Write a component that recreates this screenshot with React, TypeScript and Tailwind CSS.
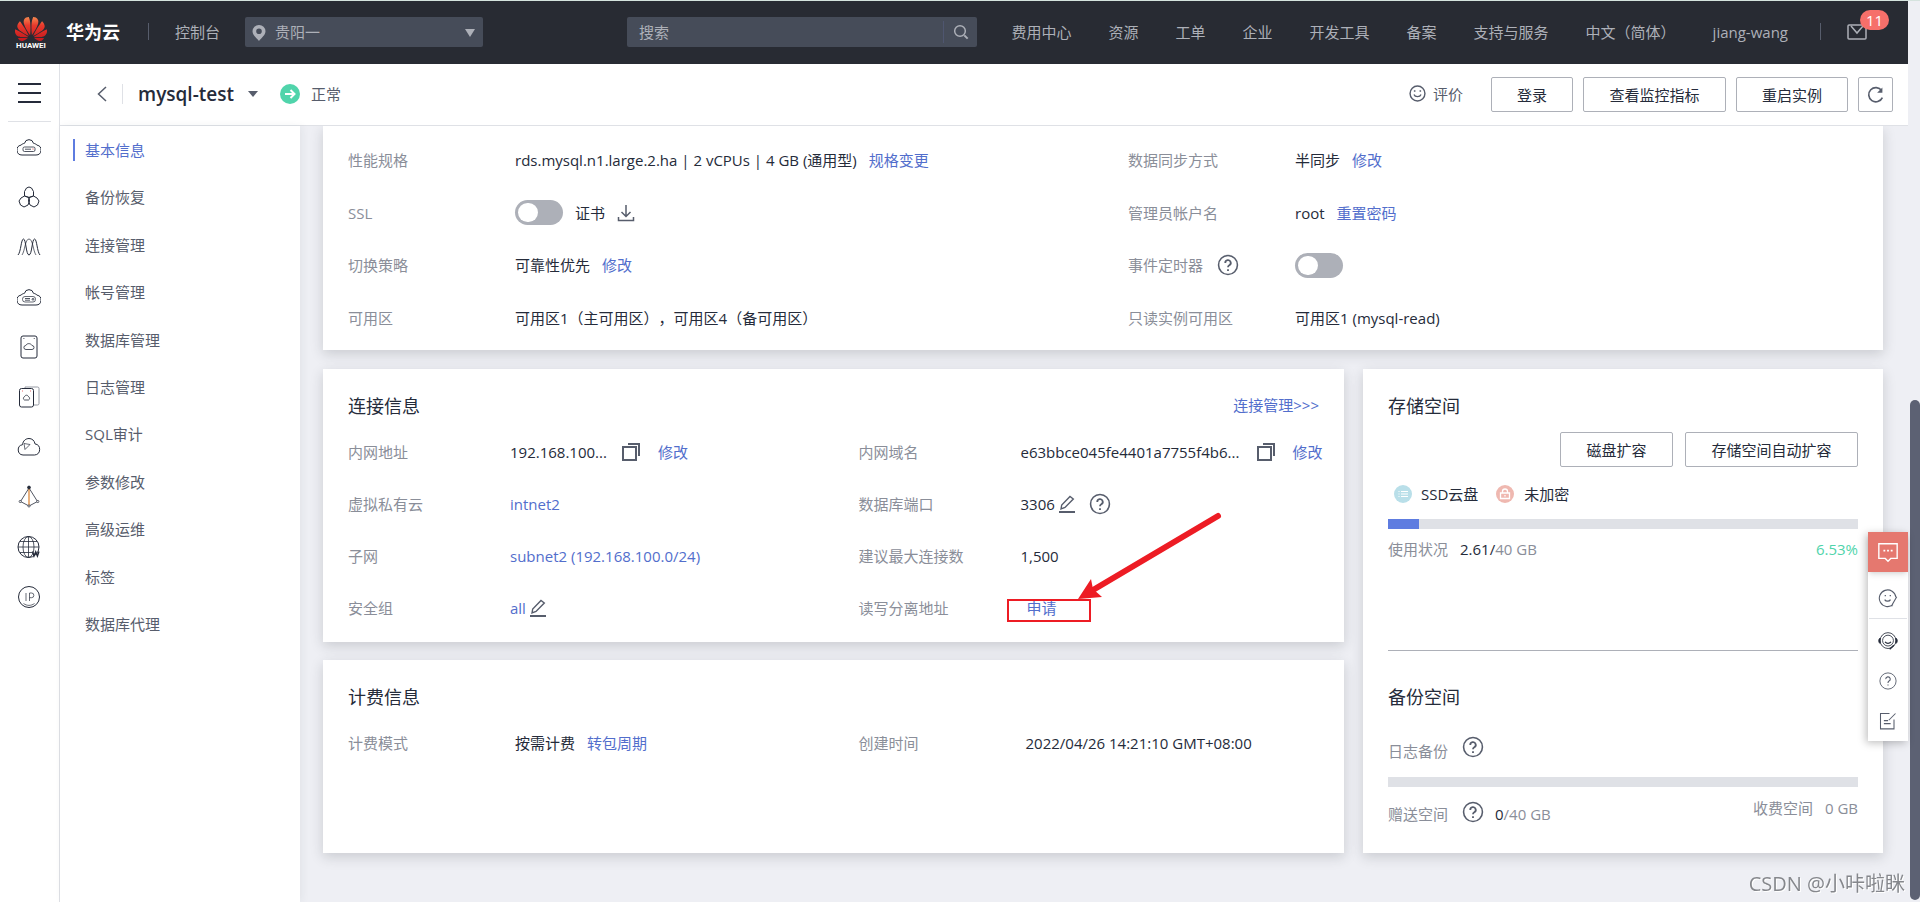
import { useState, type ReactNode } from "react";
import { SiHuawei } from "react-icons/si";

const topNav = ["费用中心", "资源", "工单", "企业", "开发工具", "备案", "支持与服务", "中文（简体）", "jiang-wang"];

const sideNav = [
  "基本信息",
  "备份恢复",
  "连接管理",
  "帐号管理",
  "数据库管理",
  "日志管理",
  "SQL审计",
  "参数修改",
  "高级运维",
  "标签",
  "数据库代理",
];

const cloud = "M5 20a5 5 0 0 1-1-9.900C5 9 6.500 8.500 7.500 8.300a4.600 4.600 0 0 1 9 0c1 .2 2.500.7 3.500 1.800a5 5 0 0 1-1 9.900z";

const services: { name: string; icon: ReactNode }[] = [
  {
    name: "弹性云服务器",
    icon: (
      <>
        <path d={cloud} />
        <rect x="6" y="12" width="12" height="4.500" rx="1.500" strokeWidth="0.800" />
        <path d="M8 14.200h6" strokeWidth="0.800" />
        <path d="M15.500 14h1" stroke="#e5484d" />
      </>
    ),
  },
  {
    name: "云容器引擎",
    icon: (
      <>
        <path d="m9.500 3 2.500-1 2.500 1 2 3.500V11L12 12.500 7.500 11V6.500z" />
        <path d="m4 13 3.500-2 4.500 1.500.5 3.500-1.500 4-4 2-3.500-2L2 16z" />
        <path d="m20 13-3.500-2-4.500 1.500-.5 3.500 1.500 4 4 2 3.500-2 1.500-4z" />
      </>
    ),
  },
  {
    name: "弹性伸缩",
    icon: (
      <>
        <path d="M1 20C4 17 4 4 6.500 4S9 20 12 20 15 4 17.500 4 20 17 23 20" />
        <path d="M5 20C8 16 8 4 12 4s4 12 7 16" strokeWidth="0.700" />
      </>
    ),
  },
  {
    name: "裸金属服务器",
    icon: (
      <>
        <path d={cloud} />
        <rect x="5.500" y="11.500" width="13" height="5.500" rx="2.500" strokeWidth="0.700" />
        <path d="M8 13.500h5M8 15.200h5" strokeWidth="0.800" />
        <circle cx="16" cy="14.300" r="0.900" strokeWidth="0.800" />
      </>
    ),
  },
  {
    name: "云硬盘",
    icon: (
      <>
        <rect x="4" y="1" width="16" height="22" rx="2" />
        <path d="M9 14.500a2 2 0 0 1-.2-4c1-2.500 5-2.500 6.200 0a2 2 0 0 1 0 4z" strokeWidth="0.800" />
        <path d="M6.500 3.500h.8M16.800 3.500h.8" />
      </>
    ),
  },
  {
    name: "云备份",
    icon: (
      <>
        <path d="M8 3.500V2h12.500A1.500 1.500 0 0 1 22 3.500v15a1.500 1.500 0 0 1-1.500 1.500H17" stroke="#8a8e99" strokeWidth="0.900" />
        <rect x="2.500" y="3.500" width="14" height="18.500" rx="2" />
        <path d="M7.500 15a1.800 1.800 0 0 1 0-3.300c.8-2 3.200-2 4 0a1.800 1.800 0 0 1 0 3.300z" strokeWidth="0.800" />
        <path d="M5 6h.8M13 6h.8" stroke="#e5484d" />
      </>
    ),
  },
  {
    name: "虚拟私有云",
    icon: (
      <>
        <path d="M6 20a5.200 5.200 0 0 1-.5-10.300C6 5.500 9 3.500 12 3.500s5.500 2 6 5.400A5.600 5.600 0 0 1 17.500 20z" />
        <path d="m7 8.500 6 1-5 5z" strokeWidth="0.700" />
      </>
    ),
  },
  {
    name: "弹性负载均衡",
    icon: (
      <>
        <path d="M12 3 3.500 16.500 12 21l8.500-4.500z" strokeWidth="0.800" />
        <path d="M12 3v18" stroke="#d97e2a" strokeWidth="1.200" />
        <circle cx="12" cy="2.500" r="1.400" fill="#252b3a" />
        <circle cx="3.200" cy="16.500" r="1.100" fill="#fff" strokeWidth="0.700" />
        <circle cx="20.800" cy="16.500" r="1.100" fill="#fff" strokeWidth="0.700" />
        <circle cx="12" cy="21" r="1.100" fill="#fff" strokeWidth="0.700" />
      </>
    ),
  },
  {
    name: "云解析",
    icon: (
      <>
        <circle cx="11.500" cy="12" r="10.500" />
        <ellipse cx="11.500" cy="12" rx="5.500" ry="10.500" strokeWidth="0.800" />
        <path d="M11.500 1.500v21M1 12h21M3 6.500h17M3 17.500h12" strokeWidth="0.800" />
        <path d="m15.500 16.500 1.500 4.500 1.700-4 1.700 4 1.500-4.500" strokeWidth="1.500" />
      </>
    ),
  },
  {
    name: "弹性公网IP",
    icon: (
      <>
        <circle cx="12" cy="12" r="10.500" />
        <path d="M9 8v8M12.500 16V8h2a2.300 2.300 0 0 1 0 4.700h-2M6.500 18.500c3.500 2.500 7.500 2.500 11 0" strokeWidth="0.700" />
      </>
    ),
  },
];

function Glyph({ children, className = "h-5 w-5" }: { children: ReactNode; className?: string }) {
  return (
    <svg
      viewBox="0 0 24 24"
      fill="none"
      stroke="currentColor"
      strokeWidth="1"
      className={`shrink-0 ${className}`}
      aria-hidden="true"
    >
      {children}
    </svg>
  );
}

function Help() {
  return (
    <button aria-label="帮助" className="shrink-0 text-[#575d6c]">
      <Glyph className="h-[22px] w-[22px]">
        <circle cx="12" cy="12" r="10.300" strokeWidth="1.700" />
        <path d="M9 9.700a3 3 0 1 1 4.400 2.600c-1 .6-1.400 1-1.400 2.200" strokeWidth="2" />
        <path d="M12 16.500v2" strokeWidth="2" />
      </Glyph>
    </button>
  );
}

function Copy() {
  return (
    <button aria-label="复制" className="shrink-0 text-[#575d6c]">
      <svg viewBox="0 0 18 18" className="h-[18px] w-[18px]" fill="none" stroke="currentColor" strokeWidth="2">
        <path d="M1 4h13v13H1z" />
        <path d="M6 1h11v12" />
      </svg>
    </button>
  );
}

function Edit() {
  return (
    <button aria-label="编辑" className="shrink-0 text-[#575d6c]">
      <svg viewBox="0 0 16 18" className="h-[18px] w-4" fill="none" stroke="currentColor" strokeWidth="1.400">
        <path d="m2 14 .7-4L11 1.500 14.300 4 6 12.500z" />
        <path d="M0 17h16" strokeWidth="2" />
      </svg>
    </button>
  );
}

function TextLink({ children }: { children: ReactNode }) {
  return (
    <a href="#" className="whitespace-nowrap text-[#526ecc]">
      {children}
    </a>
  );
}

function Toggle({ label }: { label: string }) {
  const [on, setOn] = useState(false);
  return (
    <input
      type="checkbox"
      role="switch"
      aria-label={label}
      checked={on}
      onChange={() => setOn(!on)}
      className="h-[25px] w-12 shrink-0 appearance-none rounded-full bg-[#adb0b8] p-[3px] before:block before:h-[19px] before:w-5 before:rounded-full before:bg-white checked:bg-[#5e7ce0] checked:before:ml-auto"
    />
  );
}

function Field({ label, wide, children }: { label: ReactNode; wide?: boolean; children: ReactNode }) {
  return (
    <div className="flex items-center pl-[25px]">
      <dt className={`flex shrink-0 items-center gap-[14px] text-[#8a8e99] ${wide ? "w-[167px]" : "w-[162px]"}`}>
        {label}
      </dt>
      <dd className="flex items-center gap-3 whitespace-nowrap">{children}</dd>
    </div>
  );
}

const card = "bg-white shadow-[0_4px_12px_rgba(40,43,51,0.18)]";
const outline =
  "flex h-[35px] items-center justify-center rounded-[2px] border border-[#adb0b8] bg-white text-[#252b3a]";

function TopBar() {
  return (
    <header className="flex h-[63px] shrink-0 items-center bg-[#282b33] pr-[41px] pb-[2px] pl-[15px] text-[#adb0b8]">
      <a href="#" aria-label="华为云" className="flex items-center gap-[19px]">
        <span className="flex w-8 flex-col items-center pt-1">
          <svg className="absolute h-0 w-0" aria-hidden="true">
            <linearGradient id="petal" x1="0" y1="0" x2="0" y2="1">
              <stop offset="0" stopColor="#f5894f" />
              <stop offset="0.350" stopColor="#e8392c" />
              <stop offset="1" stopColor="#c4161c" />
            </linearGradient>
          </svg>
          <SiHuawei className="-my-1 h-8 w-8" style={{ fill: "url(#petal)" }} />
          <span className="font-[Roboto] text-[8px] leading-[10px] font-bold text-white">HUAWEI</span>
        </span>
        <span className="text-lg font-bold text-white">华为云</span>
      </a>
      <span className="mr-[26px] ml-7 h-[17px] w-px bg-[#575d6c]" />
      <a href="#" className="whitespace-nowrap">
        控制台
      </a>
      <div className="relative ml-[25px]">
        <svg viewBox="0 0 14 16" className="absolute top-2 left-[7px] h-4 w-[14px]" fill="#adb0b8">
          <path fillRule="evenodd" d="M7 0a6.400 6.400 0 0 1 6.500 6.300C13.500 10 9.500 13 7 16 4.500 13 .5 10 .5 6.300A6.400 6.400 0 0 1 7 0m0 3.500a2.800 2.800 0 1 0 0 5.600 2.800 2.800 0 0 0 0-5.600" />
        </svg>
        <select aria-label="区域" className="h-[30px] w-[238px] appearance-none rounded-[2px] bg-[#464c59] pl-[30px]">
          <option>贵阳一</option>
        </select>
        <svg viewBox="0 0 10 8" className="pointer-events-none absolute top-3 right-2 h-2 w-[10px]" fill="#adb0b8">
          <path d="M0 0h10L5 8z" />
        </svg>
      </div>
      <form className="ml-[144px] flex h-[30px] w-[350px] items-center rounded-[2px] bg-[#464c59]">
        <input
          type="search"
          aria-label="搜索"
          placeholder="搜索"
          className="h-full min-w-0 flex-1 bg-transparent pl-3 outline-none placeholder:text-[#adb0b8]"
        />
        <button type="button" aria-label="搜索" className="flex h-[22px] w-[34px] items-center justify-center border-l border-[#4f5670]">
          <Glyph className="h-4 w-4">
            <circle cx="10.500" cy="10.500" r="8" strokeWidth="2.200" />
            <path d="m17 17 5 5" strokeWidth="3" />
          </Glyph>
        </button>
      </form>
      <nav className="ml-auto flex items-center gap-[37px]">
        {topNav.map((item) => (
          <a key={item} href="#" className="whitespace-nowrap">
            {item}
          </a>
        ))}
      </nav>
      <span className="mr-[26px] ml-8 h-[17px] w-px bg-[#575d6c]" />
      <a href="#" aria-label="消息" className="relative">
        <svg viewBox="0 0 20 16" className="h-4 w-5" fill="none" stroke="#adb0b8" strokeWidth="1.500">
          <rect x="1" y="1" width="18" height="14" rx="1" />
          <path d="m4 2 6 7 6-7" />
        </svg>
        <span className="absolute -top-[14px] left-[13px] flex h-5 w-[29px] items-center justify-center rounded-full bg-[#f66f6a] text-white">
          11
        </span>
      </a>
    </header>
  );
}

function InstanceBar() {
  return (
    <div className="flex h-[62px] shrink-0 items-center border-b border-[#dfe1e6] bg-white pr-[15px] pl-[37px] text-[#575d6c]">
      <div className="flex items-center pb-[2px]">
        <a href="#" aria-label="返回">
          <svg viewBox="0 0 10 16" className="h-4 w-[10px]" fill="none" stroke="currentColor" strokeWidth="1.500">
            <path d="M9 1 1.500 8 9 15" />
          </svg>
        </a>
        <span className="mr-[15px] ml-[15px] h-5 w-px bg-[#dfe1e6]" />
        <button className="flex items-center gap-[14px] text-[19px] font-semibold text-[#252b3a]">
          mysql-test
          <svg viewBox="0 0 10 6" className="h-[6px] w-[10px]" fill="#575d6c">
            <path d="M0 0h10L5 6z" />
          </svg>
        </button>
        <svg viewBox="0 0 20 20" className="ml-[22px] h-5 w-5" fill="none">
          <circle cx="10" cy="10" r="10" fill="#50d4ab" />
          <path d="M5 10h9M10.500 6l4 4-4 4" stroke="#fff" strokeWidth="2" />
        </svg>
        <span className="ml-[11px]">正常</span>
      </div>
      <div className="ml-auto flex items-center gap-[10px]">
        <a href="#" className="mr-[18px] flex items-center gap-[7px] pb-[2px]">
          <Glyph className="h-[17px] w-[17px]">
            <circle cx="12" cy="12" r="10.500" strokeWidth="2" />
            <path d="M7 13.500c1.500 4 8.500 4 10 0" strokeWidth="1.800" />
            <path d="M8 7.500v2M16 7.500v2" strokeWidth="2.200" />
          </Glyph>
          评价
        </a>
        <button className={`w-[82px] ${outline}`}>登录</button>
        <button className={`w-[143px] ${outline}`}>查看监控指标</button>
        <button className={`w-28 ${outline}`}>重启实例</button>
        <button aria-label="刷新" className={`w-[35px] ${outline}`}>
          <Glyph className="h-[18px] w-[18px] text-[#575d6c]">
            <path d="M20.500 15.500A9.500 9.500 0 1 1 19.500 6" strokeWidth="2.200" />
            <path d="M20.500 2v7h-7z" fill="currentColor" stroke="none" />
          </Glyph>
        </button>
      </div>
    </div>
  );
}

function ConnectionCard() {
  return (
    <section className={`pb-2 ${card}`}>
      <div className="flex h-[57px] items-start justify-between px-[25px] pt-[25px]">
        <h2 className="text-lg leading-6">连接信息</h2>
        <TextLink>连接管理&gt;&gt;&gt;</TextLink>
      </div>
      <dl className="grid h-[208px] grid-cols-2 grid-rows-4">
        <Field label="内网地址">
          <span className="w-[100px]">192.168.100...</span>
          <Copy />
          <span className="pl-[6px]">
            <TextLink>修改</TextLink>
          </span>
        </Field>
        <Field label="内网域名">
          <span className="w-56">e63bbce045fe4401a7755f4b6...</span>
          <Copy />
          <span className="pl-[6px]">
            <TextLink>修改</TextLink>
          </span>
        </Field>
        <Field label="虚拟私有云">
          <TextLink>intnet2</TextLink>
        </Field>
        <Field label="数据库端口">
          <span className="flex items-center gap-1 pr-[2px]">
            3306
            <Edit />
          </span>
          <Help />
        </Field>
        <Field label="子网">
          <TextLink>subnet2 (192.168.100.0/24)</TextLink>
        </Field>
        <Field label="建议最大连接数">1,500</Field>
        <Field label="安全组">
          <span className="flex items-center gap-1">
            <TextLink>all</TextLink>
            <Edit />
          </span>
        </Field>
        <Field label="读写分离地址">
          <span className="relative pl-[6px]">
            <TextLink>申请</TextLink>
            <span className="pointer-events-none absolute top-[2px] -left-[14px] h-[23px] w-[84px] border-2 border-[#ed1c24]" />
            <svg
              viewBox="0 0 146 90"
              className="pointer-events-none absolute bottom-[18px] left-[57px] h-[90px] w-[146px]"
              fill="#ed1c24"
              aria-hidden="true"
            >
              <path d="M140 5 15 79" stroke="#ed1c24" strokeWidth="6" strokeLinecap="round" />
              <path d="M0 88 13 68l2 10 9 8z" />
            </svg>
          </span>
        </Field>
      </dl>
    </section>
  );
}

function StorageCard() {
  return (
    <section className={`flex w-[520px] shrink-0 flex-col px-[25px] ${card}`}>
      <h2 className="mt-[25px] text-lg leading-6">存储空间</h2>
      <div className="mt-[14px] flex justify-end gap-3">
        <button className={`w-[113px] ${outline}`}>磁盘扩容</button>
        <button className={`w-[173px] ${outline}`}>存储空间自动扩容</button>
      </div>
      <div className="mt-4 flex items-center pl-[6px]">
        <svg viewBox="0 0 18 18" className="mr-[9px] h-[18px] w-[18px]" fill="none" stroke="#fff">
          <circle cx="9" cy="9" r="9" fill="#b9dfe9" stroke="none" />
          <path d="M4.500 6.500h1M7 6.500h7M4.500 9h1M7 9h7M4.500 11.500h1M7 11.500h7" />
        </svg>
        SSD云盘
        <svg viewBox="0 0 18 18" className="mr-[10px] ml-[18px] h-[18px] w-[18px]" fill="none" stroke="#fff">
          <circle cx="9" cy="9" r="9" fill="#efb8b0" stroke="none" />
          <path d="M4.500 8h9v5.500h-9zM6.500 8V6.500a2.500 2.500 0 0 1 5 0V8M9 10v1.500" strokeWidth="1.300" />
        </svg>
        未加密
      </div>
      <div className="mt-[14px] h-[10px] bg-[#dfe1e6]">
        <div className="h-full bg-[#5e7ce0]" style={{ width: "6.53%" }} />
      </div>
      <div className="mt-[9px] flex items-center text-[#8a8e99]">
        使用状况
        <span className="ml-3">
          <span className="text-[#252b3a]">2.61/</span>40 GB
        </span>
        <span className="ml-auto text-[#50d4ab]">6.53%</span>
      </div>
      <hr className="mt-[90px] border-[#adb0b8]" />
      <h2 className="mt-[34px] text-lg leading-6">备份空间</h2>
      <div className="mt-[27px] flex items-start gap-[14px] text-[#8a8e99]">
        <span className="pt-1">日志备份</span>
        <Help />
      </div>
      <div className="mt-[15px] h-[10px] bg-[#dfe1e6]" />
      <div className="mt-[10px] flex items-start text-[#8a8e99]">
        <span className="pt-[6px]">赠送空间</span>
        <span className="mr-[11px] ml-[14px] flex pt-1">
          <Help />
        </span>
        <span className="pt-[6px]">
          <span className="text-[#252b3a]">0</span>/40 GB
        </span>
        <span className="ml-auto">收费空间</span>
        <span className="ml-3">0 GB</span>
      </div>
    </section>
  );
}

function FloatingTools() {
  return (
    <aside className="fixed top-[532px] right-3 flex w-10 flex-col items-center bg-white pb-[2px] text-[#575d6c] shadow-[-2px_2px_8px_rgba(0,0,0,0.25)]">
      <button aria-label="在线咨询" className="flex h-10 w-full items-center justify-center bg-[#e5786f] text-white shadow-md">
        <Glyph className="h-[22px] w-[22px]">
          <path d="M2 3h20v16h-7l-3 3-3-3H2z" strokeWidth="1.500" />
          <path d="M7 10.500h2M11 10.500h2M15 10.500h2" strokeWidth="2" />
        </Glyph>
      </button>
      <button aria-label="评价" className="mt-[5px] flex h-[42px] w-[38px] items-center justify-center border-b border-[#dfe1e6]">
        <Glyph>
          <path d="M18 20a10 10 0 1 1 3.500-9M22.500 10.500 17 20l-.5 2" strokeWidth="1.300" />
          <path d="M8 14c1.500 2.500 5.500 2.500 7 0M8 9h1.500M14 9h1.500" strokeWidth="1.500" />
        </Glyph>
      </button>
      <button aria-label="客服" className="flex h-11 items-center text-[#252b3a]">
        <Glyph>
          <circle cx="12" cy="11.500" r="9.500" />
          <circle cx="12" cy="11.500" r="6.500" />
          <path d="M2.500 8.500a4 4 0 0 0 0 6.500zM21.500 8.500a4 4 0 0 1 0 6.500z" fill="currentColor" />
          <path d="M8.500 13c2 2.500 5 2.500 7 0M19 17l-5 5" strokeWidth="1.700" />
        </Glyph>
      </button>
      <button aria-label="帮助" className="flex h-9 items-center">
        <Glyph className="h-[18px] w-[18px]">
          <circle cx="12" cy="12" r="10.800" strokeWidth="1.200" />
          <path d="M9 9.500a3 3 0 1 1 4.400 2.600c-1 .6-1.400 1.200-1.400 2.400M12 16.500V18" strokeWidth="1.500" />
        </Glyph>
      </button>
      <button aria-label="反馈" className="flex h-10 items-center pt-1">
        <Glyph className="h-[18px] w-[18px]">
          <path d="M14 2H2v20.500h18V10M22 2l-9 9M6.500 11.500H12M6.500 15.500h9" strokeWidth="1.400" />
        </Glyph>
      </button>
    </aside>
  );
}

export default function App() {
  const [active, setActive] = useState("基本信息");

  return (
    <div className="flex h-screen overflow-hidden border-t border-[#d5e3de] bg-[#eeeff4] font-['Open_Sans','Noto_Sans_CJK_SC',sans-serif] text-[15px] leading-[22px] text-[#252b3a] [text-spacing-trim:space-all]">
      <div className="flex min-w-0 flex-1 flex-col">
        <TopBar />
        <div className="flex min-h-0 flex-1">
          <nav aria-label="服务" className="flex w-[60px] shrink-0 flex-col items-center border-r border-[#dfe1e6] bg-white pr-px text-[#252b3a]">
            <button aria-label="菜单" className="flex h-[58px] w-[43px] shrink-0 items-center justify-center border-b border-[#dfe1e6]">
              <svg viewBox="0 0 23 20" className="h-5 w-[23px]" stroke="currentColor" strokeWidth="2">
                <path d="M0 1h23M0 10h23M0 19h23" />
              </svg>
            </button>
            {services.map((s) => (
              <a key={s.name} href="#" aria-label={s.name} className="flex h-[50px] shrink-0 items-center">
                <Glyph className="h-6 w-6">{s.icon}</Glyph>
              </a>
            ))}
          </nav>

          <div className="flex min-w-0 flex-1 flex-col">
            <InstanceBar />
            <div className="flex min-h-0 flex-1">
              <nav aria-label="实例" className="w-60 shrink-0 bg-white pt-[13px] shadow-[2px_0_8px_rgba(40,43,51,0.06)]">
                <ul className="flex h-[496px] flex-col justify-between pl-[13px]">
                  {sideNav.map((item) => (
                    <li key={item}>
                      <a
                        href="#"
                        onClick={() => setActive(item)}
                        className={`block border-l-2 pl-[10px] ${
                          item === active ? "border-[#5e7ce0] text-[#526ecc]" : "border-transparent text-[#575d6c]"
                        }`}
                      >
                        {item}
                      </a>
                    </li>
                  ))}
                </ul>
              </nav>

              <main className="flex min-w-0 flex-1 flex-col gap-[19px] overflow-hidden pr-[25px] pl-[23px]">
                <section className={`pt-2 pb-[6px] ${card}`}>
                  <dl className="grid h-[210px] grid-cols-2 grid-rows-4">
                    <Field wide label="性能规格">
                      rds.mysql.n1.large.2.ha | 2 vCPUs | 4 GB (通用型)
                      <TextLink>规格变更</TextLink>
                    </Field>
                    <Field wide label="数据同步方式">
                      半同步
                      <TextLink>修改</TextLink>
                    </Field>
                    <Field wide label="SSL">
                      <Toggle label="SSL" />
                      证书
                      <button aria-label="下载证书" className="text-[#575d6c]">
                        <svg viewBox="0 0 18 18" className="h-[18px] w-[18px]" fill="none" stroke="currentColor" strokeWidth="1.500">
                          <path d="M9 1v11M4.500 8 9 12.500 13.500 8M1.500 13v3.500h15V13" />
                        </svg>
                      </button>
                    </Field>
                    <Field wide label="管理员帐户名">
                      root
                      <TextLink>重置密码</TextLink>
                    </Field>
                    <Field wide label="切换策略">
                      可靠性优先
                      <TextLink>修改</TextLink>
                    </Field>
                    <Field
                      wide
                      label={
                        <>
                          事件定时器
                          <Help />
                        </>
                      }
                    >
                      <Toggle label="事件定时器" />
                    </Field>
                    <Field wide label="可用区">
                      可用区1（主可用区），可用区4（备可用区）
                    </Field>
                    <Field wide label="只读实例可用区">
                      可用区1 (mysql-read)
                    </Field>
                  </dl>
                </section>

                <div className="flex gap-[19px]">
                  <div className="flex min-w-0 flex-1 flex-col gap-[18px]">
                    <ConnectionCard />
                    <section className={`pb-[84px] ${card}`}>
                      <h2 className="px-[25px] pt-[25px] text-lg leading-6">计费信息</h2>
                      <dl className="mt-[7px] grid h-[53px] grid-cols-2">
                        <Field wide label="计费模式">
                          按需计费
                          <TextLink>转包周期</TextLink>
                        </Field>
                        <Field wide label="创建时间">
                          2022/04/26 14:21:10 GMT+08:00
                        </Field>
                      </dl>
                    </section>
                  </div>
                  <StorageCard />
                </div>
              </main>
            </div>
          </div>
        </div>
      </div>

      <div className="flex w-3 shrink-0 flex-col pt-[399px] pb-[2px] pl-[2px]">
        <div className="w-[10px] flex-1 rounded-full bg-[#5c6173]" />
      </div>

      <FloatingTools />
      <span className="fixed right-[15px] bottom-1 text-xl leading-7 text-[#85878c] [text-shadow:1px_1px_0_#fff]">
        CSDN @小咔啦眯
      </span>
    </div>
  );
}
